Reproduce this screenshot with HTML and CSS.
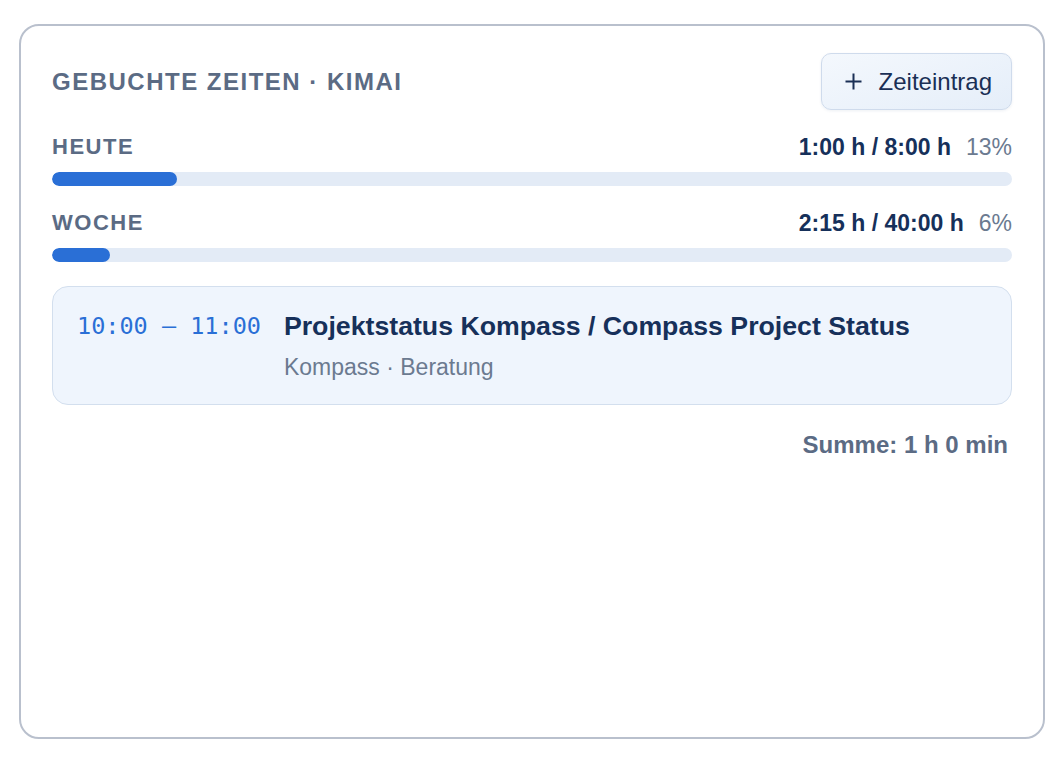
FILE: index.html
```html
<!DOCTYPE html>
<html lang="de">
<head>
<meta charset="utf-8">
<title>Gebuchte Zeiten · Kimai</title>
<link rel="stylesheet" href="styles.css">
</head>
<body>
<section class="card">
  <header class="card-head">
    <h2 class="card-title">Gebuchte Zeiten · Kimai</h2>
    <button class="btn-add" type="button">
      <svg class="btn-icon" width="17" height="17" viewBox="0 0 17 17" aria-hidden="true"><path d="M8.5 0.5v16M0.5 8.5h16" stroke="currentColor" stroke-width="2" fill="none"/></svg>
      <span>Zeiteintrag</span>
    </button>
  </header>

  <div class="stat">
    <div class="stat-row">
      <span class="stat-label">Heute</span>
      <span class="stat-value"><b>1:00 h / 8:00 h</b><span class="stat-pct">13%</span></span>
    </div>
    <div class="bar"><div class="bar-fill" style="width:13%"></div></div>
  </div>

  <div class="stat">
    <div class="stat-row">
      <span class="stat-label">Woche</span>
      <span class="stat-value"><b>2:15 h / 40:00 h</b><span class="stat-pct">6%</span></span>
    </div>
    <div class="bar"><div class="bar-fill" style="width:6%"></div></div>
  </div>

  <div class="entry">
    <div class="entry-time">10:00 – 11:00</div>
    <div class="entry-body">
      <div class="entry-title">Projektstatus Kompass / Compass Project Status</div>
      <div class="entry-sub">Kompass · Beratung</div>
    </div>
  </div>

  <div class="sum">Summe: 1 h 0 min</div>
</section>
</body>
</html>
```

FILE: styles.css
```css
* { box-sizing: border-box; }
html, body { margin: 0; background: #ffffff; }
body {
  padding: 24px 12px 22px 19px;
  font-family: "Liberation Sans", Arial, sans-serif;
  color: #16305a;
}
.card {
  height: 715px;
  border: 2px solid #b9c0cd;
  border-radius: 20px;
  padding: 27px 31px;
  display: flex;
  flex-direction: column;
  gap: 24px;
  background: #fff;
}
.card-head {
  display: flex;
  align-items: center;
  justify-content: space-between;
  height: 57px;
}
.card-title {
  margin: 0;
  font-size: 24px;
  font-weight: 700;
  letter-spacing: 1.5px;
  text-transform: uppercase;
  color: #5b6b84;
}
.btn-add {
  display: flex;
  align-items: center;
  gap: 17px;
  height: 57px;
  padding: 0 19px 0 23px;
  border: 1px solid #cfdbec;
  border-radius: 10px;
  background: linear-gradient(160deg, #f4f8fd 0%, #e5eef9 100%);
  box-shadow: 0 1px 3px rgba(30, 60, 110, 0.08);
  font-family: "Liberation Sans", Arial, sans-serif;
  font-size: 24px;
  color: #1a2f55;
  cursor: pointer;
}
.btn-icon { display: block; }
.stat { display: flex; flex-direction: column; gap: 12px; }
.stat-row {
  display: flex;
  justify-content: space-between;
  align-items: center;
  height: 26px;
}
.stat-label {
  font-size: 22px;
  font-weight: 700;
  letter-spacing: 1.5px;
  text-transform: uppercase;
  color: #5b6b84;
}
.stat-value { font-size: 23px; color: #16305a; }
.stat-value b { font-weight: 700; }
.stat-pct { color: #6b7a90; margin-left: 15px; }
.bar {
  height: 14px;
  border-radius: 7px;
  background: #e3ebf6;
  overflow: hidden;
}
.bar-fill {
  height: 100%;
  border-radius: 7px;
  background: #2a6fd6;
}
.entry {
  display: flex;
  gap: 23px;
  padding: 24px;
  border: 1px solid #d3dfee;
  border-radius: 16px;
  background: #eff5fd;
}
.entry-time {
  font-family: "DejaVu Sans Mono", monospace;
  font-size: 23.5px;
  line-height: 30px;
  color: #2a6fd6;
  white-space: nowrap;
}
.entry-body { display: flex; flex-direction: column; gap: 13px; }
.entry-title {
  font-size: 26.7px;
  line-height: 30px;
  font-weight: 700;
  color: #16305a;
}
.entry-sub {
  font-size: 23px;
  line-height: 26px;
  color: #6b7a90;
}
.sum {
  margin-top: 3px;
  padding-right: 4px;
  text-align: right;
  font-size: 24px;
  line-height: 26px;
  font-weight: 700;
  color: #5b6b84;
}
```
